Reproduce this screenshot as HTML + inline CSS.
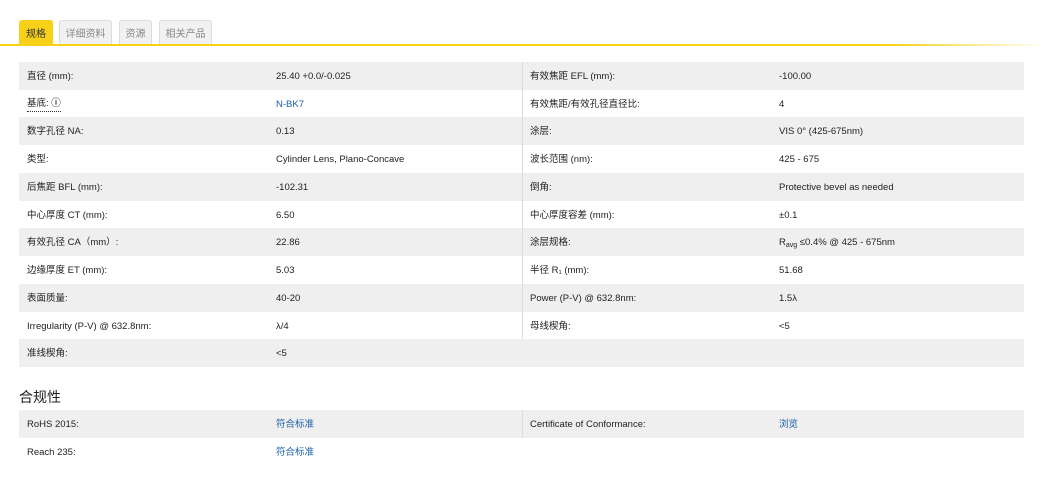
<!DOCTYPE html>
<html><head><meta charset="utf-8"><style>
*{margin:0;padding:0;box-sizing:border-box}
body{width:1047px;height:491px;background:#fff;font-family:"Liberation Sans","Noto Sans CJK SC",sans-serif;font-size:9.5px;color:#222;position:relative;overflow:hidden}
.tab{position:absolute;top:20px;height:25px;border:1px solid #ddd;border-bottom:none;background:#f1f1f1;border-radius:3px 3px 0 0;color:#888;font-size:10px;line-height:27px;text-align:center}
.tab.a{background:#f7d117;border-color:#f7d117;color:#333}
.line{position:absolute;top:44px;left:0;width:1047px;height:2px;background:linear-gradient(to right,#f7d117 0,#f7d117 85%,#fff 100%)}
.row{position:absolute;left:19px;width:1005px;height:28px;line-height:29px}
.row.g{background:#efefef}
.row span{position:absolute;top:0;white-space:nowrap}
.c1{left:8px}.c2{left:257px}.c3{left:511px}.c4{left:760px}
.vl{position:absolute;left:522px;width:1px;background:#dcdcdc}
a{color:#1a5ea8;text-decoration:none}
h3{position:absolute;left:19px;top:387px;font-size:14px;font-weight:normal;color:#222}
sub{font-size:7px;vertical-align:-2px}
</style></head><body>
<div class="tab a" style="left:19px;width:34px">规格</div>
<div class="tab" style="left:59px;width:53px">详细资料</div>
<div class="tab" style="left:119px;width:33px">资源</div>
<div class="tab" style="left:159px;width:53px">相关产品</div>
<div class="line"></div>

<div class="row g" style="top:62px"><span class="c1">直径 (mm):</span><span class="c2">25.40 +0.0/-0.025</span><span class="c3">有效焦距 EFL (mm):</span><span class="c4">-100.00</span></div>
<div class="row" style="top:90px"><span class="c1" style="border-bottom:1px dotted #333;line-height:14px;top:7px">基底: <b>ⓘ</b></span><span class="c2"><a>N-BK7</a></span><span class="c3">有效焦距/有效孔径直径比:</span><span class="c4">4</span></div>
<div class="row g" style="top:117px"><span class="c1">数字孔径 NA:</span><span class="c2">0.13</span><span class="c3">涂层:</span><span class="c4">VIS 0° (425-675nm)</span></div>
<div class="row" style="top:145px"><span class="c1">类型:</span><span class="c2">Cylinder Lens, Plano-Concave</span><span class="c3">波长范围 (nm):</span><span class="c4">425 - 675</span></div>
<div class="row g" style="top:173px"><span class="c1">后焦距 BFL (mm):</span><span class="c2">-102.31</span><span class="c3">倒角:</span><span class="c4">Protective bevel as needed</span></div>
<div class="row" style="top:201px"><span class="c1">中心厚度 CT (mm):</span><span class="c2">6.50</span><span class="c3">中心厚度容差 (mm):</span><span class="c4">±0.1</span></div>
<div class="row g" style="top:228px"><span class="c1">有效孔径 CA（mm）:</span><span class="c2">22.86</span><span class="c3">涂层规格:</span><span class="c4">R<sub>avg</sub> ≤0.4% @ 425 - 675nm</span></div>
<div class="row" style="top:256px"><span class="c1">边缘厚度 ET (mm):</span><span class="c2">5.03</span><span class="c3">半径 R₁ (mm):</span><span class="c4">51.68</span></div>
<div class="row g" style="top:284px"><span class="c1">表面质量:</span><span class="c2">40-20</span><span class="c3">Power (P-V) @ 632.8nm:</span><span class="c4">1.5λ</span></div>
<div class="row" style="top:312px"><span class="c1">Irregularity (P-V) @ 632.8nm:</span><span class="c2">λ/4</span><span class="c3">母线楔角:</span><span class="c4">&lt;5</span></div>
<div class="row g" style="top:339px"><span class="c1">准线楔角:</span><span class="c2">&lt;5</span></div>
<div class="vl" style="top:62px;height:277px"></div>

<h3>合规性</h3>
<div class="row g" style="top:410px"><span class="c1">RoHS 2015:</span><span class="c2"><a>符合标准</a></span><span class="c3">Certificate of Conformance:</span><span class="c4"><a>浏览</a></span></div>
<div class="row" style="top:438px"><span class="c1">Reach 235:</span><span class="c2"><a>符合标准</a></span></div>
<div class="vl" style="top:410px;height:28px"></div>
</body></html>
